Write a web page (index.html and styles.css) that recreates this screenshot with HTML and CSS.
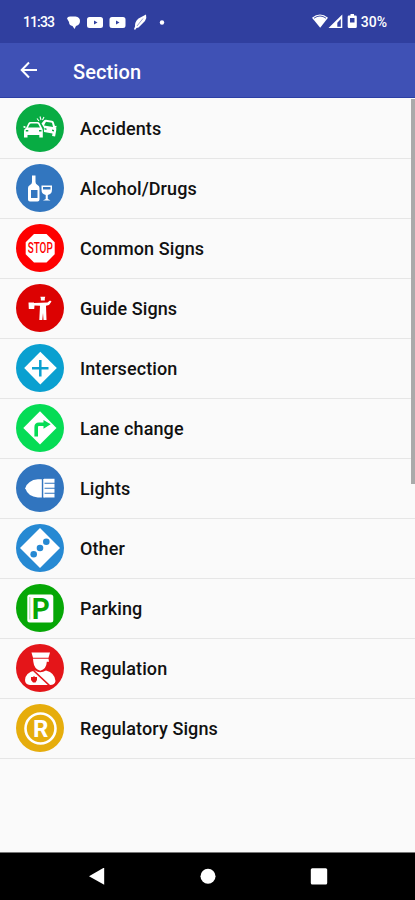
FILE: index.html
```
<!DOCTYPE html>
<html lang="en">

<head>
     <meta charset="utf-8">
     <title>Section</title>
     <link rel="stylesheet" href="styles.css">
</head>

<body>
     <div class="status-bar">
          <span class="time">11:33</span>
          <svg class="notifications" width="104" height="20" viewBox="0 0 104 20" fill="#fff">
               <path d="M3 3.500h5.500q4.500.5 4.500 4.500t-4 5l-1.500 3-2-3Q2 12.500 2 9L0 5.500Q.5 3.500 3 3.500z" />
               <path fill-rule="evenodd" d="M22.500 4h11q2.500 0 2.500 2.500v6q0 2.500-2.500 2.500h-11q-2.500 0-2.500-2.500v-6q0-2.500 2.500-2.500zM27 7.500v4l3.500-2z" />
               <path fill-rule="evenodd" d="M45 4h11q2.500 0 2.500 2.500v6q0 2.500-2.500 2.500h-11q-2.500 0-2.500-2.500v-6q0-2.500 2.500-2.500zM49 7.500v4l3.500-2z" />
               <path d="M79 1.500q1 3-1 6.500l-6.500 6.500-2 .5-1.500 2-1-1 1-2.500q-.5-4.500 3.500-8z" />
               <path d="M70 13l6-7.500" stroke="#303f9f" stroke-width=".5" />
               <circle cx="95" cy="9.500" r="2.200" />
          </svg>
          <svg class="signals" width="46" height="20" viewBox="0 0 46 20" fill="#fff">
               <path d="M0 5.700Q8 -.8 16 5.700L8.200 15.800z" />
               <path d="M2 6.200Q8 1.800 14 6.200" fill="none" stroke="#303f9f" stroke-width=".9" />
               <path fill-rule="evenodd" d="M30.300 2.500V16H16.500zM28.800 7l-3.500 3.700v4h3.500z" />
               <path fill-rule="evenodd" d="M38.500 2h3.500v1.500h1.500q1.300 0 1.300 1.300v9.900q0 1.300-1.300 1.300h-6.500q-1.300 0-1.300-1.300V4.800q0-1.300 1.300-1.300h1.500zM38 6v4.500h4.500V6z" />
          </svg>
          <span class="battery">30%</span>
     </div>

     <div class="app-bar">
          <svg width="18" height="18" viewBox="0 0 18 18" fill="none" stroke="#fff" stroke-width="2">
               <path d="M9 1.500L1.700 9 9 16.500M2 9h15" />
          </svg>
          <h1>Section</h1>
     </div>

     <div class="list">
          <div class="item">
               <svg class="icon" viewBox="0 0 48 48" fill="#fff">
                    <circle cx="24" cy="24" r="24" fill="#08ac43" />
                    <path fill-rule="evenodd" d="M10 24l2.500-5q.5-1 2-1h7q1.500 0 2 1l2.500 5q.8 1 .8 3v6.500h-3.500V31H11.500v2.500H8V27q0-2 2-3zM12 23.500h12l-1.700-3.300q-.3-.7-1.300-.7h-6q-1 0-1.300.7zM9.800 26v1.500h2.500V26zM23 26v1.500h2.500V26z" />
                    <path fill-rule="evenodd" d="M25.500 19.500l2.500-3q.8-.9 2-.7l6 1q1.500.3 1.800 1.500l1.400 4.500q1.500 1 1.100 3l-1.200 6.700-3-.6.4-2.300-8.500-1.500-.1-4.700zM28 21.500l9 1.500-.8-3.400q-.2-.9-1.200-1.100l-4-.6q-.9-.2-1.500.7zM28.500 24v1.500l2 .4v-1.500zM36 25.500v1.500l2 .4v-1.500z" />
                    <path d="M23 17l-2-2.500M25 16l-1-3.500M26.500 16l1.500-3" stroke="#fff" stroke-width="1.100" />
                    <path d="M7.500 22.500l2 1M40.500 22.500l-2 .5" stroke="#fff" stroke-width="1.500" />
               </svg>
               <span class="label">Accidents</span>
          </div>
          <div class="item">
               <svg class="icon" viewBox="0 0 48 48" fill="#fff">
                    <circle cx="24" cy="24" r="24" fill="#3276bf" />
                    <path fill-rule="evenodd" d="M16 11.500h3.500V18q0 2 2 3t2 3v11.500q0 2-2 2h-7.500q-2 0-2-2V24q0-2 2-3t2-3zM15 26v8h6.500v-8z" />
                    <path fill-rule="evenodd" d="M25.500 21.500h10.500v4q0 4.500-4.200 5.500v4l2.700 1.500h-7.500l2.700-1.500V31q-4.200-1-4.200-5.500zM27 23v2.500h7.500v-2.500z" />
               </svg>
               <span class="label">Alcohol/Drugs</span>
          </div>
          <div class="item">
               <svg class="icon" viewBox="0 0 48 48">
                    <circle cx="24" cy="24" r="24" fill="#fe0000" />
                    <path d="M18 10h12.500l8.200 8.200v12L30.500 38.500H18l-8.300-8.300v-12z" fill="#fff" />
                    <text class="stop" x="24.200" y="29.300" textLength="25" lengthAdjust="spacingAndGlyphs">STOP</text>
               </svg>
               <span class="label">Common Signs</span>
          </div>
          <div class="item">
               <svg class="icon" viewBox="0 0 48 48" fill="#fff">
                    <circle cx="24" cy="24" r="24" fill="#dc0202" />
                    <path d="M24.300 12.800h5l-.5 1.500v2.200h-4v-2.200z" />
                    <path d="M12.500 18.500H18v.5l13.500-.5 2.500-2 1.500 1-2.500 3.500-3 .8.500 14.200h-3l-.5-7-.7 7h-3l.7-14.200-5.500-.3-.3 3.500h-5.400z" />
               </svg>
               <span class="label">Guide Signs</span>
          </div>
          <div class="item">
               <svg class="icon" viewBox="0 0 48 48">
                    <circle cx="24" cy="24" r="24" fill="#0aa0d0" />
                    <path d="M24.300 7.800L40.800 24 24.300 40.500 8.200 24z" fill="#fff" />
                    <path d="M24.300 16v16.500M16 24.200h16.500" stroke="#0aa0d0" stroke-width="2.500" />
               </svg>
               <span class="label">Intersection</span>
          </div>
          <div class="item">
               <svg class="icon" viewBox="0 0 48 48">
                    <circle cx="24" cy="24" r="24" fill="#05dc55" />
                    <path d="M24 7.300L40.500 24 24 40.500 7.300 24z" fill="#fff" />
                    <path d="M20.200 32.500V23q0-2.700 2.700-2.700H28" fill="none" stroke="#05dc55" stroke-width="3.600" />
                    <path d="M27.500 16l7.200 4.200-7.200 4.500z" fill="#05dc55" />
               </svg>
               <span class="label">Lane change</span>
          </div>
          <div class="item">
               <svg class="icon" viewBox="0 0 48 48" fill="#fff">
                    <circle cx="24" cy="24" r="24" fill="#3175bf" />
                    <path d="M25.800 15.200v18.300h-4Q12 32.500 9.200 24.200 12 16 21.800 15.200z" />
                    <path d="M27.900 15v18.500" stroke="#fff" stroke-width="1.300" />
                    <path d="M28 16.800h10.500M28 21.700h10.500M28 26.700h10.500M28 31.600h10.500" stroke="#fff" stroke-width="3.900" />
               </svg>
               <span class="label">Lights</span>
          </div>
          <div class="item">
               <svg class="icon" viewBox="0 0 48 48">
                    <circle cx="24" cy="24" r="24" fill="#2689d3" />
                    <path d="M24 4L44 24 24 44 4 24z" fill="#fff" />
                    <g fill="#2689d3">
                         <circle cx="17.700" cy="30.200" r="3.300" />
                         <circle cx="24" cy="24" r="3.300" />
                         <circle cx="30.300" cy="17.800" r="3.300" />
                    </g>
               </svg>
               <span class="label">Other</span>
          </div>
          <div class="item">
               <svg class="icon" viewBox="0 0 48 48">
                    <circle cx="24" cy="24" r="24" fill="#06a706" />
                    <rect x="11.300" y="10.500" width="26" height="28" rx="2.500" fill="#fff" />
                    <path d="M13.800 13v22.500" stroke="#06a706" stroke-width=".4" />
                    <text class="parking" x="24.800" y="34.700" textLength="18" lengthAdjust="spacingAndGlyphs">P</text>
               </svg>
               <span class="label">Parking</span>
          </div>
          <div class="item">
               <svg class="icon" viewBox="0 0 48 48" fill="#fff">
                    <circle cx="24" cy="24" r="24" fill="#e41519" />
                    <path d="M15.500 8.500h18.500l-1.500 5.300h-15.500z" />
                    <path d="M17 14.700h15.500l.5 3h-2.200Q30.500 25 24.300 26.800 18 25 17.300 17.500z" />
                    <path d="M19 26.500q5 3.500 11 0 9 2.500 9.500 10.500-.5 4-5.500 4h-20q-5-.5-5-5 .5-7.500 10-9.500z" />
                    <path d="M17.500 26.500L34 42" stroke="#e41519" stroke-width="1.700" />
                    <path d="M15 33h2l1-1 1 1h2v3l-1.500 2.500h-2.500L15 36z" fill="#e41519" />
               </svg>
               <span class="label">Regulation</span>
          </div>
          <div class="item">
               <svg class="icon" viewBox="0 0 48 48">
                    <circle cx="24" cy="24" r="24" fill="#e6ad0c" />
                    <circle cx="24.500" cy="24.500" r="15" fill="none" stroke="#fff" stroke-width="2.600" />
                    <text class="registered" x="24.800" y="33">R</text>
               </svg>
               <span class="label">Regulatory Signs</span>
          </div>
          <div class="scrollbar"></div>
     </div>

     <div class="nav-bar">
          <svg width="18" height="18" viewBox="0 0 18 18" fill="#fff">
               <path d="M1 8.200L16.200-.5v17.200z" />
          </svg>
          <svg width="18" height="18" viewBox="0 0 18 18" fill="#fff">
               <circle cx="9" cy="8.200" r="7.500" />
          </svg>
          <svg width="18" height="18" viewBox="0 0 18 18" fill="#fff">
               <rect x=".8" y=".2" width="16.400" height="16.200" rx="1.500" />
          </svg>
     </div>
</body>

</html>
```
FILE: styles.css
```
body {
     margin: 0;
     height: 900px;
     display: flex;
     flex-direction: column;
     font-family: Roboto, sans-serif;
     background-color: #fafafa;
     overflow: hidden;
}

.status-bar {
     display: flex;
     align-items: center;
     box-sizing: border-box;
     height: 43px;
     padding: 0 28px 0 23px;
     background-color: #303f9f;
     color: #fff;
     font-size: 14px;
     font-weight: 500;
}

.time {
     width: 44px;
     letter-spacing: -0.9px;
}

.signals {
     margin-left: auto;
     margin-top: 1px;
}

.notifications {
     margin-top: 2px;
}

.battery {
     margin-left: 3px;
}

.app-bar {
     display: flex;
     align-items: center;
     box-sizing: border-box;
     height: 55px;
     padding-left: 20px;
     background-color: #3f51b5;
     border-bottom: 1px solid #2c3fa5;
     color: #fff;
}

.app-bar h1 {
     margin: 3px 0 0 35px;
     font-size: 20px;
     font-weight: 500;
     letter-spacing: 0.1px;
}

.list {
     position: relative;
     flex: 1;
}

.item {
     display: flex;
     align-items: center;
     height: 60px;
     padding-left: 16px;
     box-shadow: 0 1px #e6e6e6;
}

.icon {
     width: 48px;
     height: 48px;
     margin-right: 16px;
}

.label {
     color: #111;
     font-size: 18px;
     font-weight: 500;
     letter-spacing: 0.1px;
     margin-top: 1px;
}

.icon text {
     font-family: Roboto, sans-serif;
     font-weight: 700;
     text-anchor: middle;
}

.icon .stop {
     fill: #fe0000;
     font-size: 14.500px;
     font-weight: 500;
}

.parking {
     fill: #06a706;
     font-size: 29px;
}

.registered {
     fill: #fff;
     font-size: 24px;
}

.scrollbar {
     position: absolute;
     top: 1px;
     right: 0;
     width: 4px;
     height: 385px;
     background-color: #aaa;
}

.nav-bar {
     display: flex;
     align-items: center;
     justify-content: center;
     gap: 93px;
     box-sizing: border-box;
     height: 48px;
     border-top: 1px solid #777;
     background-color: #000;
}
```
